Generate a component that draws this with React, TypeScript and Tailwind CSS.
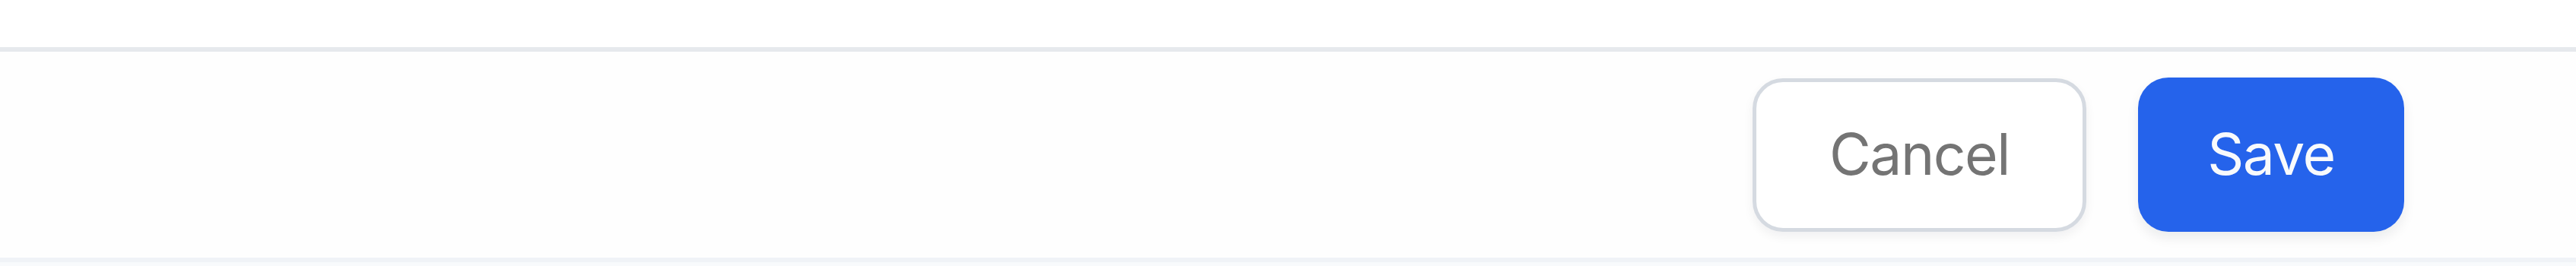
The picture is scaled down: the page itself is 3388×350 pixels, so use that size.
import React from "react";

export default function App() {
  const handleCancel = () => {};
  const handleSave = () => {};

  return (
    <div className="w-[3388px] h-[350px] bg-white flex flex-col" style={{ fontFamily: "Inter, 'Noto Sans', sans-serif" }}>
      <div className="h-[62px] bg-white" />
      <div className="h-[6px] bg-[#e6e9ed]" />
      <div className="h-[271px] flex items-center justify-end gap-[68px] pr-[226px] bg-[#fefefe]">
        <button
          type="button"
          onClick={handleCancel}
          className="w-[439px] h-[202px] rounded-[40px] border-[5px] border-[#d5dae1] bg-white text-[75px] tracking-[-0.02em] text-[#747474] shadow-[0_6px_14px_rgba(15,23,42,0.06)]"
        >
          Cancel
        </button>
        <button
          type="button"
          onClick={handleSave}
          className="w-[350px] h-[203px] rounded-[40px] bg-[#2563eb] text-[75px] tracking-[-0.02em] text-[#f8fafc] shadow-[0_8px_16px_rgba(15,23,42,0.08)]"
        >
          Save
        </button>
      </div>
      <div className="h-[6px] bg-[#f0f3f7]" />
      <div className="flex-1 bg-[#f8fafc]" />
    </div>
  );
}
